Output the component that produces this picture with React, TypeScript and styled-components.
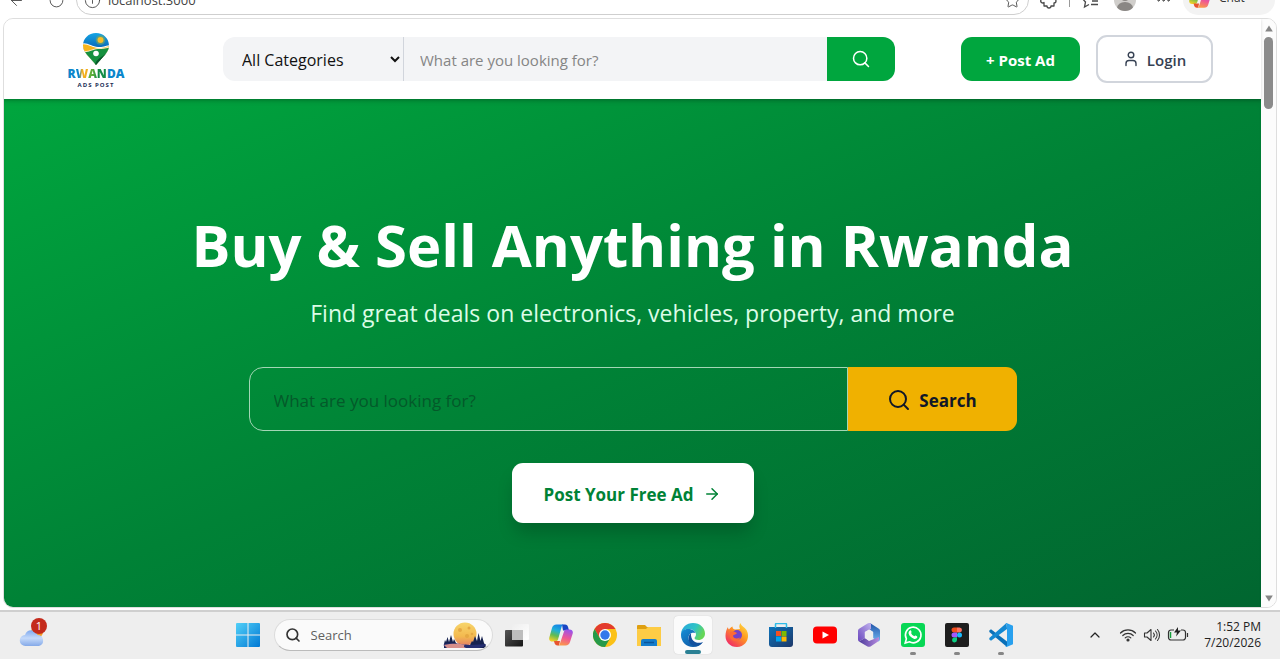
import React from "react";
import styled, { createGlobalStyle, css } from "styled-components";
import { ArrowLeft, ArrowRight, ChevronDown, ChevronUp, Info, MoreHorizontal, RotateCw, Search, Star } from "lucide-react";

const Global = createGlobalStyle`
  * { box-sizing: border-box; }
  body { margin: 0; background: #fff; font-family: "Open Sans", "Noto Sans", sans-serif; color: #1a1a1a; }
  button, input, select { font-family: inherit; }
`;

const Shell = styled.div`
  min-height: 100vh;
  display: flex;
  flex-direction: column;
`;

/* ---------- browser bar ---------- */
const BrowserBar = styled.div`
  height: 18px;
  overflow: hidden;
  display: flex;
  align-items: flex-end;
  padding: 0 5px 3px 6px;
  color: #4a4a4a;
`;
const BarButton = styled.button`
  flex: none;
  width: 40px;
  height: 30px;
  padding: 0;
  border: 0;
  background: none;
  color: inherit;
  display: flex;
  align-items: center;
  justify-content: center;
`;
const NavGroup = styled.div`
  display: flex;
  width: 70px;
  flex: none;
  button:first-child { width: 20px; }
  button:last-child { width: 60px; }
`;
const Address = styled.div`
  flex: 1;
  height: 30px;
  border: 1px solid #cfcfcf;
  border-radius: 15px;
  display: flex;
  align-items: center;
  padding: 0 7px;
  gap: 7px;
`;
const AddressInput = styled.input`
  flex: 1;
  min-width: 0;
  border: 0;
  outline: 0;
  padding: 0;
  background: none;
  font-size: 13px;
  color: #444;
`;
const Divider = styled.span`
  width: 1px;
  height: 14px;
  margin-bottom: 8px;
  background: #999;
`;
const Avatar = styled.span`
  flex: none;
  width: 22px;
  height: 22px;
  margin: 0 7px 4px 4px;
  border-radius: 50%;
  overflow: hidden;
  background: #d0cecb;
  svg { display: block; }
`;
const ChatButton = styled.button`
  flex: none;
  width: 92px;
  height: 30px;
  border: 0;
  border-radius: 15px;
  background: #f3f3f3;
  color: #333;
  display: flex;
  align-items: center;
  gap: 8px;
  padding: 0 6px 4px;
  font-size: 12px;
  line-height: 16px;
  svg:last-child { margin-left: auto; }
`;

/* ---------- page ---------- */
const Frame = styled.div`
  flex: 1;
  margin: 0 3px;
  border: 1px solid #dedede;
  border-radius: 10px;
  overflow: hidden;
  display: flex;
`;
const Page = styled.div`
  flex: 1;
  min-width: 0;
  display: flex;
  flex-direction: column;
`;
const ScrollTrack = styled.div`
  flex: none;
  width: 15px;
  background: #fcfcfc;
  display: flex;
  flex-direction: column;
  align-items: center;
  padding: 6px 0 5px;
  gap: 5px;
`;
const Thumb = styled.div`
  width: 9px;
  height: 72px;
  border-radius: 5px;
  background: #8b8b8b;
  margin-bottom: auto;
`;
const Header = styled.header`
  position: relative;
  height: 80px;
  background: #fff;
  box-shadow: 0 1px 3px rgba(0, 0, 0, 0.15);
  display: flex;
  align-items: center;
  padding: 0 48px 0 32px;
`;
const LogoLink = styled.a`
  flex: none;
  width: 120px;
  margin-right: 67px;
  padding-top: 1px;
  display: flex;
  flex-direction: column;
  align-items: center;
  text-decoration: none;
`;
const LogoName = styled.span`
  font: 800 12px/16px "Open Sans", sans-serif;
  color: #0b86cc;
`;
const Tint = styled.span<{ $from: string; $to: string }>`
  background: linear-gradient(to right, ${(p) => p.$from} 25%, ${(p) => p.$to} 50%);
  background-clip: text;
  -webkit-background-clip: text;
  color: transparent;
`;
const LogoTag = styled.span`
  font: 700 6px/6px "Open Sans", sans-serif;
  letter-spacing: 1px;
  color: #1c2f57;
`;
const HeaderSearch = styled.form`
  flex: 1;
  min-width: 0;
  height: 44px;
  display: flex;
  border-radius: 12px;
  overflow: hidden;
  background: #f3f4f6;
`;
const Category = styled.select`
  width: 181px;
  border: 0;
  border-right: 1px solid #d1d5dc;
  background: transparent;
  padding: 2px 0 0 15px;
  font-size: 16px;
  color: #111;
`;
const HeaderInput = styled.input`
  flex: 1;
  min-width: 0;
  border: 0;
  background: transparent;
  padding: 2px 16px 0;
  font-size: 15px;
  &::placeholder { color: #858585; }
`;
const HeaderSubmit = styled.button`
  width: 68px;
  border: 0;
  background: #00a63e;
  color: #fff;
  display: flex;
  align-items: center;
  justify-content: center;
`;
const Actions = styled.div`
  margin-left: 66px;
  display: flex;
  align-items: center;
  gap: 16px;
`;
const HeaderButton = styled.button<{ $primary?: boolean }>`
  display: flex;
  align-items: center;
  justify-content: center;
  gap: 8px;
  border-radius: 11px;
  font-size: 15px;
  padding: 2px 0 0;
  ${(p) =>
    p.$primary
      ? css`
          width: 119px;
          height: 44px;
          border: 0;
          background: #00a63e;
          color: #fff;
          font-weight: 700;
        `
      : css`
          width: 117px;
          height: 48px;
          border: 2px solid #d1d5dc;
          background: #fff;
          color: #364153;
          font-weight: 600;
        `}
`;
const Hero = styled.main`
  flex: 1;
  background: linear-gradient(to bottom right, #00a63e, #008236 50%, #016630);
  box-shadow: inset 0 5px 6px -4px rgba(0, 0, 0, 0.2);
  display: flex;
  flex-direction: column;
  align-items: center;
  padding: 106px 24px 84px;
`;
const Title = styled.h1`
  margin: 0;
  font-size: 58px;
  line-height: 80px;
  font-weight: 700;
  text-align: center;
  color: #fff;
`;
const Lead = styled.p`
  margin: 11px 0 0;
  font-size: 23px;
  line-height: 34px;
  text-align: center;
  color: #dcfce7;
`;
const HeroSearch = styled.form`
  margin-top: 37px;
  width: 100%;
  max-width: 768px;
  height: 64px;
  display: flex;
`;
const HeroInput = styled.input`
  flex: 1;
  min-width: 0;
  border: 1px solid #a3d6b5;
  border-radius: 14px 0 0 14px;
  background: transparent;
  padding: 2px 24px 0;
  font-size: 17px;
  color: #fff;
  &::placeholder { color: #04592a; }
`;
const HeroSubmit = styled.button`
  width: 169px;
  border: 0;
  border-radius: 0 11px 11px 0;
  background: #f0b100;
  color: #101828;
  display: flex;
  align-items: center;
  justify-content: center;
  gap: 8px;
  padding: 2px 0 0;
  font-size: 17px;
  font-weight: 700;
`;
const Cta = styled.a`
  margin-top: 32px;
  width: 242px;
  height: 60px;
  border-radius: 11px;
  background: #fff;
  color: #008236;
  box-shadow: 0 12px 18px -3px rgba(0, 0, 0, 0.2);
  display: flex;
  align-items: center;
  justify-content: center;
  gap: 10px;
  padding-top: 2px;
  font-size: 17px;
  font-weight: 700;
  text-decoration: none;
`;

/* ---------- taskbar ---------- */
const Taskbar = styled.footer`
  margin-top: 2px;
  height: 49px;
  border-top: 2px solid #cfcfcf;
  background: #eee;
  display: grid;
  grid-template-columns: 1fr auto 1fr;
  align-items: center;
  padding: 0 19px 2px;
`;
const Weather = styled.button`
  position: relative;
  width: 30px;
  height: 32px;
  padding: 0;
  border: 0;
  background: none;
`;
const Count = styled.span`
  position: absolute;
  top: -1px;
  right: 2px;
  width: 16px;
  height: 16px;
  border-radius: 50%;
  background: #c42b1c;
  color: #fff;
  font-size: 11px;
  line-height: 16px;
  text-align: center;
`;
const Apps = styled.nav`
  display: flex;
  align-items: center;
  margin-right: 32px;
`;
const AppButton = styled.button<{ $active?: boolean }>`
  width: 38px;
  height: 38px;
  margin: 0 3px;
  padding: 0;
  border: 0;
  border-radius: 4px;
  background: ${(p) => (p.$active ? "#fbfbfb" : "none")};
  box-shadow: ${(p) => (p.$active ? "0 0 1px #bbb" : "none")};
  position: relative;
  display: flex;
  align-items: center;
  justify-content: center;
`;
const Running = styled.span<{ $wide?: boolean }>`
  position: absolute;
  bottom: ${(p) => (p.$wide ? 0 : "-1px")};
  left: 50%;
  width: ${(p) => (p.$wide ? 16 : 6)}px;
  height: ${(p) => (p.$wide ? 4 : 3)}px;
  transform: translateX(-50%);
  border-radius: 2px;
  background: ${(p) => (p.$wide ? "#2b8094" : "#868686")};
`;
const TaskSearch = styled.label`
  width: 219px;
  height: 32px;
  margin: 0 2px 0 4px;
  border: 1px solid #dcdcdc;
  border-bottom-color: #bbb;
  border-radius: 16px;
  background: #fafafa;
  display: flex;
  align-items: center;
  padding: 0 4px 0 10px;
  gap: 10px;
  overflow: hidden;
`;
const TaskInput = styled.input`
  flex: 1;
  min-width: 0;
  border: 0;
  padding: 0;
  background: none;
  font-size: 13px;
  &::placeholder { color: #606060; }
`;
const Tray = styled.div`
  display: flex;
  align-items: center;
  justify-content: flex-end;
  color: #222;
`;
const TrayIcons = styled.div`
  display: flex;
  align-items: center;
  gap: 6px;
  margin: 0 15px 0 16px;
`;
const Clock = styled.time`
  font-size: 12px;
  line-height: 16px;
  text-align: right;
`;

const PinLogo = () => (
  <svg width="28" height="34" viewBox="0 0 28 34" aria-hidden="true">
    <defs>
      <clipPath id="pin"><path d="M14 1C6.500 1 1 6.500 1 13.500 1 21 8 25 14 33 20 25 27 21 27 13.500 27 6.500 21.500 1 14 1z" /></clipPath>
      <linearGradient id="sky" x1="0" y1="0" x2="0" y2="1"><stop stopColor="#14a9e8" /><stop offset=".5" stopColor="#0a63b5" /></linearGradient>
    </defs>
    <g clipPath="url(#pin)">
      <rect width="28" height="34" fill="url(#sky)" />
      <circle cx="18.500" cy="8" r="4.800" fill="#7aa65c" opacity=".6" />
      <circle cx="18.500" cy="8" r="3" fill="#f8bd26" />
      <path d="M0 11.500c6-1 10 3.500 16 3.500 5 0 8-1.500 12-2v21H0z" fill="#fff" />
      <path d="M0 12.500c6-1 10 3.500 16 3.500 5 0 8-1.500 12-2v20H0z" fill="#f7b51d" />
      <path d="M0 19c7 1 10-2.500 16-3 5 0 8-.5 12-1.500V34H0z" fill="#fff" opacity=".7" />
      <path d="M0 20c7 1 10-2.500 16-3 5 0 8-.5 12-1.500V34H0z" fill="#16913f" />
      <path d="M13 34c0-7 7-8 15-16v16z" fill="#07562b" />
      <circle cx="14" cy="21.500" r="2.800" fill="#fff" />
    </g>
  </svg>
);

const UserIcon = () => (
  <svg width="16" height="18" viewBox="0 0 16 18" fill="none" stroke="currentColor" strokeWidth="1.400" strokeLinecap="round" aria-hidden="true">
    <circle cx="8" cy="4" r="2.800" /><path d="M3 14.500v-2a3 3 0 0 1 3-3h4a3 3 0 0 1 3 3v2" />
  </svg>
);

const PuzzleIcon = () => (
  <svg width="18" height="18" viewBox="0 0 18 18" fill="none" stroke="currentColor" strokeWidth="1.300" strokeLinejoin="round" aria-hidden="true">
    <path d="M3 4h3.500a2 2 0 1 1 4 0H14v4a2 2 0 1 1 0 4v3h-3a2 2 0 1 1-4 0H4v-3.500a2 2 0 1 1-1-3.500z" />
  </svg>
);

const CloudIcon = () => (
  <svg width="30" height="32" viewBox="0 0 30 32" aria-hidden="true">
    <defs><linearGradient id="cloud" x1="0" y1="0" x2="0" y2="1"><stop stopColor="#7fa9ee" /><stop offset=".5" stopColor="#c5dafa" /><stop offset="1" stopColor="#84a9e8" /></linearGradient></defs>
    <circle cx="18" cy="13" r="6" fill="#f59b23" />
    <path d="M6.500 27a5.500 5.500 0 0 1-.5-11 6.500 6.500 0 0 1 12.500 0 5.600 5.600 0 0 1 1.500 11z" fill="url(#cloud)" />
  </svg>
);

const WindowsIcon = () => (
  <svg width="24" height="24" viewBox="0 0 24 24" aria-hidden="true">
    <defs><linearGradient id="win" x1="0" y1="0" x2="1" y2="1"><stop stopColor="#52d0f8" /><stop offset="1" stopColor="#0078d4" /></linearGradient></defs>
    <path fill="url(#win)" d="M1 0h10.500v11.500H0V1a1 1 0 0 1 1-1zM12.500 0H23a1 1 0 0 1 1 1v10.500H12.500zM0 12.500h11.500V24H1a1 1 0 0 1-1-1zM12.500 12.500H24V23a1 1 0 0 1-1 1H12.500z" />
  </svg>
);

const MoonIcon = () => (
  <svg width="45" height="28" viewBox="0 0 45 28" aria-hidden="true">
    <defs><linearGradient id="moon" x1="0" y1="0" x2="0" y2="1"><stop stopColor="#f7d56b" /><stop offset=".6" stopColor="#f3b94f" /><stop offset="1" stopColor="#e58163" /></linearGradient></defs>
    <circle cx="22" cy="13" r="11.500" fill="url(#moon)" />
    <g fill="#e5a843"><circle cx="17" cy="9" r="2" /><circle cx="26" cy="7" r="1.500" /><circle cx="24" cy="15" r="2" /><circle cx="29" cy="13" r="1.300" /></g>
    <path d="M1 23l1-4 1 2 1.500-5 1.500 5 2-7 2 7 1-3 2 4 2 2h12l2-4 1 1 2-6 2 5 1.500-8 2 8 1.500-5 2 7 2 3-2 2H1z" fill="#17224f" />
    <path d="M1 23c9-2 17 0 26 1 7 0 12-1 16-1-2 4-6 4-10 4H5c-3 0-5-2-4-4z" fill="#252e71" />
    <path d="M1 24c7-2 16-1.500 21-.5-1 1-2 2.500 1 3.500H4z" fill="#d68f8b" />
  </svg>
);

const TaskViewIcon = () => (
  <svg width="24" height="24" viewBox="0 0 24 24" aria-hidden="true">
    <defs>
      <linearGradient id="tvd" x1="0" y1="0" x2="1" y2="1"><stop stopColor="#555" /><stop offset="1" stopColor="#151515" /></linearGradient>
      <linearGradient id="tvl" x1="0" y1="0" x2="1" y2="1"><stop stopColor="#eee" /><stop offset="1" stopColor="#fff" /></linearGradient>
    </defs>
    <rect y="7" width="18" height="16.500" rx="1" fill="url(#tvd)" />
    <rect x="7" y="1" width="17" height="16" rx="1" fill="url(#tvl)" />
    <path d="M7 7h11v10H8a1 1 0 0 1-1-1z" fill="#bdbdbd" />
  </svg>
);

const CopilotIcon = ({ id, size = 24 }: { id: string; size?: number }) => (
  <svg width={size} height={size} viewBox="0 0 24 24" aria-hidden="true">
    <defs>
      <linearGradient id={id + "a"} x1="0.600" y1="0" x2="0.300" y2="1"><stop stopColor="#1583e6" /><stop offset=".35" stopColor="#1fb0d8" /><stop offset=".65" stopColor="#62bb52" /><stop offset="1" stopColor="#f4cf26" /></linearGradient>
      <linearGradient id={id + "b"} x1="0.600" y1="0" x2="0.300" y2="1"><stop stopColor="#9a53ea" /><stop offset=".5" stopColor="#ee5596" /><stop offset="1" stopColor="#fb9a48" /></linearGradient>
    </defs>
    <path d="M13 1.500h3c1.800 0 2.600 1 3.100 2.700L20 7.500h-6z" fill="#1746c4" />
    <path d="M7.500 1.500H15c-1.500 0-2 1-2.500 2.700L9 16.500c-.6 1.500-1.500 2-3 2H3.500C1 18.500-.3 17 .3 14.500L3 5c.7-2.300 2-3.500 4.500-3.500z" fill={`url(#${id}a)`} />
    <path d="M5 18h6l-1 4.500H8.500c-1.700 0-2.500-1-3-2.500z" fill="#e8552f" />
    <path d="M16.500 22.500H8.700c1.500 0 2-1 2.500-2.700L15 8.500c.6-1.500 1.500-2 3-2h2.500c2.500 0 3.800 1.500 3.200 4L21 19c-.7 2.300-2 3.500-4.500 3.500z" fill={`url(#${id}b)`} />
  </svg>
);

const ChromeIcon = () => (
  <svg width="24" height="24" viewBox="0 0 24 24" aria-hidden="true">
    <circle cx="12" cy="12" r="12" fill="#fbc116" />
    <path d="M12 6h10.400a12 12 0 0 0-20.800 0L6.800 15z" fill="#e33b2e" />
    <path d="M1.600 6a12 12 0 0 0 10.400 18l5.200-9H6.800z" fill="#269a49" />
    <circle cx="12" cy="12" r="6" fill="#fff" /><circle cx="12" cy="12" r="4.700" fill="#3478ea" />
  </svg>
);

const FolderIcon = () => (
  <svg width="24" height="24" viewBox="0 0 24 24" aria-hidden="true">
    <path d="M0 3a1 1 0 0 1 1-1h7l2 2h13a1 1 0 0 1 1 1v7H0z" fill="#dfa011" />
    <path d="M0 6h9l2-2h12a1 1 0 0 1 1 1v18H0z" fill="#fdcc45" />
    <path d="M4 23v-5a2 2 0 0 1 2-2h12a2 2 0 0 1 2 2v5z" fill="#147ccb" />
    <path d="M7 19.500h10" stroke="#0a5499" strokeWidth="1.500" />
  </svg>
);

const EdgeIcon = () => (
  <svg width="24" height="24" viewBox="0 0 24 24" aria-hidden="true">
    <defs>
      <linearGradient id="edg" x1="0" y1="0" x2="1" y2=".4"><stop stopColor="#2aa6df" /><stop offset=".6" stopColor="#2fc3c5" /><stop offset="1" stopColor="#65d657" /></linearGradient>
      <linearGradient id="edb" x1="0" y1="0" x2="1" y2="1"><stop stopColor="#168fd7" /><stop offset="1" stopColor="#104c99" /></linearGradient>
    </defs>
    <path d="M0 11C.5 4.500 5.600 0 12 0c7 0 12 5 12 10.500 0 4-3 6.500-6.500 6.500-2.500 0-4-1-4-2 0-.8 1.500-1.500 1.500-3.500C15 8.500 12 6 8 6c-4 0-7 2-8 5z" fill="url(#edg)" />
    <path d="M0 12c0-4 3-6 7-6 4 0 7 2 7.500 4-5-1-7 2-7 5 0 4 4 6.500 8 6.500 3 0 5-1 6.500-2.500C20 22 16.500 24 12 24 5 24 0 18.500 0 12z" fill="url(#edb)" />
    <path d="M10 10.500C7 12 6.500 18 10 21.500c3.500 2.500 9 1.500 12-2.500-6 2.500-12.500-.5-12-8.500z" fill="#12509e" />
  </svg>
);

const FirefoxIcon = () => (
  <svg width="24" height="24" viewBox="0 0 24 24" aria-hidden="true">
    <defs><linearGradient id="ff" x1="1" y1="0" x2=".2" y2="1"><stop stopColor="#ffe84a" /><stop offset=".45" stopColor="#ff9a1f" /><stop offset="1" stopColor="#f0246b" /></linearGradient></defs>
    <path d="M3 4c0 1 .3 2 1 2.500C5 5 6 4 7.500 3.500 7.500 5 8 6 10 6.500L15 6c-1-2-1-4 .5-6 .5 3 4 4 6 7 4 7 0 17-9.500 17C5 24 .5 19 .5 13 .5 9.500 1.500 6 3 4z" fill="url(#ff)" />
    <circle cx="12" cy="12" r="5" fill="#7542c9" />
    <path d="M5 9c3-1 5-.5 7 1-1 1.500-3 1.500-4 2.500 0 3 4 4 7 2-1 4-8 5-10 0z" fill="#ff6a36" />
  </svg>
);

const StoreIcon = () => (
  <svg width="24" height="24" viewBox="0 0 24 24" aria-hidden="true">
    <defs><linearGradient id="store" x1="0" y1="0" x2="1" y2="1"><stop stopColor="#0d73ba" /><stop offset="1" stopColor="#1d3768" /></linearGradient></defs>
    <path d="M0 4h24v17a3 3 0 0 1-3 3H3a3 3 0 0 1-3-3z" fill="url(#store)" />
    <path d="M6.500 5V1.500a1 1 0 0 1 1-1h9a1 1 0 0 1 1 1V5" fill="none" stroke="#2fbce8" strokeWidth="1.500" />
    <path d="M7 8h5v5H7z" fill="#f25022" /><path d="M12.500 8h5v5h-5z" fill="#7fba00" /><path d="M7 13.500h5v5H7z" fill="#00a4ef" /><path d="M12.500 13.500h5v5h-5z" fill="#ffb900" />
  </svg>
);

const YoutubeIcon = () => (
  <svg width="24" height="24" viewBox="0 0 24 24" aria-hidden="true">
    <rect y="3.500" width="24" height="17" rx="4" fill="#f00" /><path d="M9.500 8.500 16 12l-6.500 3.500z" fill="#fff" />
  </svg>
);

const OfficeIcon = () => (
  <svg width="24" height="24" viewBox="0 0 24 24" aria-hidden="true">
    <defs>
      <linearGradient id="of1" x1="0" y1="1" x2="1" y2="0"><stop stopColor="#6a47bd" /><stop offset="1" stopColor="#c0b2ee" /></linearGradient>
      <linearGradient id="of2" x1="0" y1="0" x2="0" y2="1"><stop stopColor="#1f53a8" /><stop offset="1" stopColor="#6fb5ef" /></linearGradient>
      <linearGradient id="of3" x1="0" y1="0" x2="1" y2="0"><stop stopColor="#4e3c9c" /><stop offset="1" stopColor="#b58be0" /></linearGradient>
    </defs>
    <path d="M12 0c1 0 1.500.3 2.500 1l7 4.500C22.500 6 23 7 23 8v8c0 1-.5 2-1.500 2.500L16 15V9l-4-3z" fill="url(#of2)" />
    <path d="M14 .5 14 6 8 9v6l-6 3.500C1.300 18 1 17 1 16V8c0-1 .5-2 1.500-2.500l8-5C11.500-.2 13-.2 14 .5z" fill="url(#of1)" />
    <path d="M2 18.500 8 15l4 3 10-4v2c0 1-.3 2-1 2.600l-7.500 4.800c-1 .6-2 .6-3 0z" fill="url(#of3)" />
    <path d="M12 6.500 16.200 9v6L12 17.500 7.800 15V9z" fill="#eee" />
  </svg>
);

const WhatsappIcon = () => (
  <svg width="24" height="24" viewBox="0 0 24 24" aria-hidden="true">
    <rect width="24" height="24" rx="3" fill="#07d755" />
    <path d="M4.200 20l1.200-4.200A7.800 7.800 0 1 1 8.400 18.800z" fill="none" stroke="#fff" strokeWidth="1.600" />
    <path d="M9 7.500c.6-.4 1 0 1.300.8.3.7.4 1-.2 1.800.6 1.500 1.600 2.500 3.200 3.200.8-.9 1-1 1.700-.6 1 .5 1.500.7 1.300 1.500-.5 1.500-2 2-3.500 1.500-2.500-.8-4.700-3-5.200-5.200-.2-1.300.4-2.300 1.400-3z" fill="#fff" />
  </svg>
);

const FigmaIcon = () => (
  <svg width="24" height="24" viewBox="0 0 24 24" aria-hidden="true">
    <rect width="24" height="24" rx="2" fill="#1e1e1e" />
    <path d="M12 4.500H9a2.500 2.500 0 0 0 0 5h3z" fill="#f24e1e" /><path d="M12 4.500h2.500a2.500 2.500 0 0 1 0 5H12z" fill="#ff7262" />
    <path d="M12 9.500H9a2.500 2.500 0 0 0 0 5h3z" fill="#a259ff" /><circle cx="14.500" cy="12" r="2.500" fill="#1abcfe" />
    <path d="M12 14.500H9a2.500 2.500 0 1 0 3 2.500z" fill="#0acf83" />
  </svg>
);

const CodeIcon = () => (
  <svg width="24" height="24" viewBox="0 0 24 24" aria-hidden="true">
    <path d="M.3 7.500 2 6.300 18 18.500V24L.3 9z" fill="#0a70b8" />
    <path d="M.3 16.500V15L17.500 0l.5 6L2 17.800z" fill="#1388d2" />
    <path d="M17.500 0 24 2.800v18.400L17.500 24c-.5 0-1-.5-1-1 1 .3 1.500 0 1.500-.7V1.700c0-.7-.5-1-1.500-.7z" fill="#28a0ee" />
  </svg>
);

const WifiIcon = () => (
  <svg width="18" height="16" viewBox="0 0 18 16" fill="none" stroke="#333" strokeWidth="1.200" strokeLinecap="round" aria-hidden="true">
    <path d="M1.500 6a10.600 10.600 0 0 1 15 0M3.800 8.500a7.300 7.300 0 0 1 10.400 0M6.200 10.900a4 4 0 0 1 5.600 0" /><circle cx="9" cy="13" r="1" fill="#222" />
  </svg>
);
const SoundIcon = () => (
  <svg width="18" height="16" viewBox="0 0 18 16" fill="none" stroke="#333" strokeWidth="1.100" strokeLinejoin="round" strokeLinecap="round" aria-hidden="true">
    <path d="M1.500 6h2.500l4-3.500v11L4 10H1.500zM10.500 6a3 3 0 0 1 0 4M12.500 4a6 6 0 0 1 0 8M14.500 2.500a8.500 8.500 0 0 1 0 11" />
  </svg>
);
const BatteryIcon = () => (
  <svg width="22" height="16" viewBox="0 0 22 16" fill="none" stroke="#333" strokeWidth="1.200" aria-hidden="true">
    <path d="M7 3H4a2.500 2.500 0 0 0-2.500 2.500v5A2.500 2.500 0 0 0 4 13h12a2.500 2.500 0 0 0 2.500-2.500v-5A2.500 2.500 0 0 0 16 3h-2M20.500 6v4" />
    <path d="M3.500 5v6" stroke="#16a03c" strokeWidth="1.500" /><path d="M11 0 7 5.500h3l-1 4 5-6h-3z" fill="#222" stroke="none" />
  </svg>
);

const apps: { name: string; icon: React.ReactNode; running?: boolean; active?: boolean }[] = [
  { name: "Task view", icon: <TaskViewIcon /> },
  { name: "Copilot", icon: <CopilotIcon id="cpt" /> },
  { name: "Chrome", icon: <ChromeIcon /> },
  { name: "File Explorer", icon: <FolderIcon /> },
  { name: "Edge", icon: <EdgeIcon />, active: true },
  { name: "Firefox", icon: <FirefoxIcon /> },
  { name: "Store", icon: <StoreIcon /> },
  { name: "YouTube", icon: <YoutubeIcon /> },
  { name: "Microsoft 365", icon: <OfficeIcon /> },
  { name: "WhatsApp", icon: <WhatsappIcon />, running: true },
  { name: "Figma", icon: <FigmaIcon />, running: true },
  { name: "VS Code", icon: <CodeIcon />, running: true },
];

export default function App() {
  return (
    <Shell>
      <Global />
      <BrowserBar>
        <NavGroup>
          <BarButton aria-label="Back"><ArrowLeft size={17} strokeWidth={1.3} /></BarButton>
          <BarButton aria-label="Reload"><RotateCw size={17} strokeWidth={1.3} /></BarButton>
        </NavGroup>
        <Address>
          <Info size={17} strokeWidth={1.3} />
          <AddressInput aria-label="Address" defaultValue="localhost:3000" />
          <Star size={17} strokeWidth={1.3} />
        </Address>
        <BarButton aria-label="Extensions"><PuzzleIcon /></BarButton>
        <Divider />
        <BarButton aria-label="Favorites">
          <svg width="18" height="18" viewBox="0 0 18 18" fill="none" stroke="currentColor" strokeWidth="1.300" aria-hidden="true"><path d="M8 2 6 6.500l-5 .7L4.500 11l-1 5L8 13.500M11 10h6M10 13.500h7M11 7h6" /></svg>
        </BarButton>
        <Avatar>
          <svg width="22" height="22" viewBox="0 0 22 22" aria-hidden="true"><circle cx="11" cy="8" r="4" fill="#8a8784" /><ellipse cx="11" cy="19" rx="8" ry="6" fill="#8a8784" /></svg>
        </Avatar>
        <BarButton aria-label="More"><MoreHorizontal size={17} strokeWidth={1.3} /></BarButton>
        <ChatButton><CopilotIcon id="cph" size={22} />Chat<ChevronDown size={12} /></ChatButton>
      </BrowserBar>

      <Frame>
        <Page>
          <Header>
            <LogoLink href="#" aria-label="Rwanda Ads Post">
              <PinLogo />
              <LogoName>R<Tint $from="#0b86cc" $to="#f2ae1c">W</Tint><Tint $from="#5fae3a" $to="#128c45">AN</Tint>DA</LogoName>
              <LogoTag>ADS POST</LogoTag>
            </LogoLink>
            <HeaderSearch onSubmit={(e) => e.preventDefault()}>
              <Category aria-label="Category"><option>All Categories</option></Category>
              <HeaderInput aria-label="Search ads" placeholder="What are you looking for?" />
              <HeaderSubmit aria-label="Search"><Search size={20} strokeWidth={1.8} /></HeaderSubmit>
            </HeaderSearch>
            <Actions>
              <HeaderButton $primary>+ Post Ad</HeaderButton>
              <HeaderButton><UserIcon />Login</HeaderButton>
            </Actions>
          </Header>
          <Hero>
            <Title>Buy &amp; Sell Anything in Rwanda</Title>
            <Lead>Find great deals on electronics, vehicles, property, and more</Lead>
            <HeroSearch onSubmit={(e) => e.preventDefault()}>
              <HeroInput aria-label="Search" placeholder="What are you looking for?" />
              <HeroSubmit><Search size={24} strokeWidth={2} />Search</HeroSubmit>
            </HeroSearch>
            <Cta href="#">Post Your Free Ad<ArrowRight size={18} strokeWidth={2} /></Cta>
          </Hero>
        </Page>
        <ScrollTrack aria-hidden="true">
          <svg width="8" height="7" viewBox="0 0 8 7"><path d="M4 .5 7.800 6.500H.2z" fill="#858585" /></svg>
          <Thumb />
          <svg width="8" height="7" viewBox="0 0 8 7"><path d="M4 6.500 7.800.5H.2z" fill="#858585" /></svg>
        </ScrollTrack>
      </Frame>

      <Taskbar>
        <Weather aria-label="Weather"><CloudIcon /><Count>1</Count></Weather>
        <Apps>
          <AppButton aria-label="Start"><WindowsIcon /></AppButton>
          <TaskSearch>
            <Search size={16} strokeWidth={2.5} color="#333" />
            <TaskInput aria-label="Search" placeholder="Search" />
            <MoonIcon />
          </TaskSearch>
          {apps.map((a) => (
            <AppButton key={a.name} aria-label={a.name} $active={a.active}>
              {a.icon}
              {(a.running || a.active) && <Running $wide={a.active} />}
            </AppButton>
          ))}
        </Apps>
        <Tray>
          <ChevronUp size={16} strokeWidth={1.8} />
          <TrayIcons><WifiIcon /><SoundIcon /><BatteryIcon /></TrayIcons>
          <Clock>1:52 PM<br />7/20/2026</Clock>
        </Tray>
      </Taskbar>
    </Shell>
  );
}
